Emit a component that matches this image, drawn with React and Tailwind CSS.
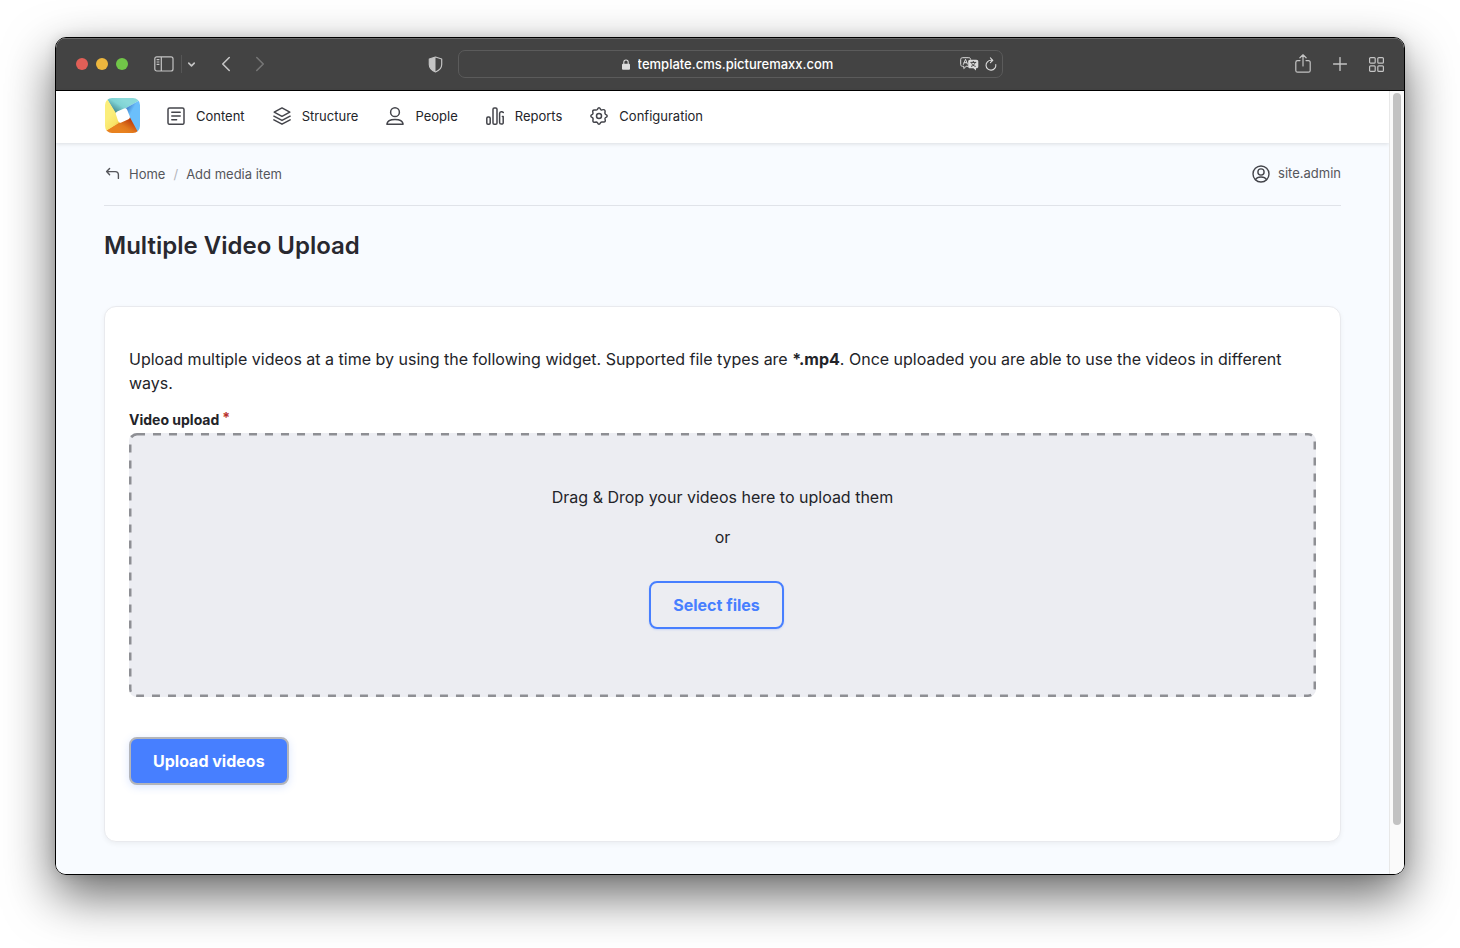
import { ChevronDown, ChevronLeft, ChevronRight, Plus } from 'lucide-react';

function Logo() {
  return (
    <svg viewBox="0 0 35 35" className="size-[35px]" aria-hidden="true">
      <defs>
        <clipPath id="logo-clip">
          <rect width="35" height="35" rx="7" />
        </clipPath>
        <linearGradient id="logo-teal" x1="0.1" y1="0.6" x2="0.6" y2="0.2">
          <stop offset="0" stopColor="#3f828c" />
          <stop offset="0.6" stopColor="#7fd3d4" />
          <stop offset="1" stopColor="#8bdada" />
        </linearGradient>
        <linearGradient id="logo-blue" x1="0.2" y1="0.1" x2="0.7" y2="0.6">
          <stop offset="0" stopColor="#2a62b4" />
          <stop offset="0.6" stopColor="#6bbffb" />
          <stop offset="1" stopColor="#6bbffb" />
        </linearGradient>
        <linearGradient id="logo-orange" x1="0.8" y1="0.2" x2="0.3" y2="0.6">
          <stop offset="0" stopColor="#b9360b" />
          <stop offset="0.7" stopColor="#e27a1e" />
          <stop offset="1" stopColor="#e8821f" />
        </linearGradient>
        <linearGradient id="logo-yellow" x1="0.5" y1="0.4" x2="0.8" y2="0.9">
          <stop offset="0" stopColor="#fbee7b" />
          <stop offset="0.6" stopColor="#f9e468" />
          <stop offset="1" stopColor="#e6b22e" />
        </linearGradient>
      </defs>
      <g clipPath="url(#logo-clip)">
        <path d="M0 0H35V2L19.5 11L17 18L10.7 16L1.5 0Z" fill="url(#logo-teal)" />
        <path d="M35 2V35H33L24.7 20L17 18L19 11.3Z" fill="url(#logo-blue)" />
        <path d="M34 35H0V33L14 24.5L17 18L25 19.5L33.5 35Z" fill="url(#logo-orange)" />
        <path d="M0 33.5V0H1.5L11.5 16L17 18L15.5 24Z" fill="url(#logo-yellow)" />
        <path
          d="M13 15.6L20 12.6L22.6 19.2L15.4 22.4Z"
          fill="#fff"
          stroke="#fff"
          strokeWidth="4.6"
          strokeLinejoin="round"
        />
      </g>
    </svg>
  );
}

function Icon({ children, box = 18, className = 'size-[18px]', width = 1.5 }) {
  return (
    <svg
      viewBox={`0 0 ${box} ${box}`}
      className={`shrink-0 ${className}`}
      fill="none"
      stroke="currentColor"
      strokeWidth={width}
      strokeLinecap="round"
      strokeLinejoin="round"
      aria-hidden="true"
    >
      {children}
    </svg>
  );
}

const navItems = [
  {
    label: 'Content',
    icon: (
      <>
        <rect x="1" y="0.9" width="16" height="16.4" rx="1.6" />
        <path d="M4.8 5.2H13.2M4.8 9H13.2M4.8 12.8H9.6" />
      </>
    ),
  },
  {
    label: 'Structure',
    icon: (
      <>
        <path d="M9 0.9L16.8 5.2L9 9.3L1.2 5.2Z" />
        <path d="M0.9 9.2L9 13.4L17.1 9.2M0.9 12.9L9 17.2L17.1 12.9" />
      </>
    ),
  },
  {
    label: 'People',
    icon: (
      <>
        <circle cx="9" cy="5.2" r="4.4" />
        <path d="M0.9 17.2C1.3 13.8 5 12.4 9 12.4S16.7 13.8 17.1 17.2Z" />
      </>
    ),
  },
  {
    label: 'Reports',
    icon: (
      <>
        <rect x="0.8" y="10" width="3.4" height="7.2" rx="1.2" />
        <rect x="7" y="0.9" width="4" height="16.3" rx="1.3" />
        <path d="M17.3 5.4C16.6 4.6 13.6 4.4 13.6 6.4V15.4C13.6 17.6 17.2 17.5 17.2 16V9.6H16.4" />
      </>
    ),
  },
  {
    label: 'Configuration',
    icon: (
      <>
        <path d="M7.4 2.4Q9 -0.8 10.6 2.4Q11 3.1 11.9 2.9Q15.3 1.9 15.1 4.5L14.9 6.1Q14.9 6.9 15.6 7.4Q18.8 9 15.6 10.6Q14.9 11.1 15 11.9Q16 15.3 13.5 15.1L11.9 14.9Q11.1 14.9 10.6 15.6Q9 18.8 7.4 15.6Q6.9 14.9 6.1 15Q2.7 16 2.9 13.5L3.1 11.9Q3.1 11.1 2.4 10.6Q-0.8 9 2.4 7.4Q3.1 6.9 3 6.1Q2 2.7 4.5 2.9L6.1 3.1Q6.9 3.1 7.4 2.4Z" />
        <circle cx="9" cy="9" r="2.5" />
      </>
    ),
  },
];

function BrowserBar() {
  return (
    <div className="flex h-[53px] items-center border-b border-black bg-[#434343] px-5 text-[#c4c4c4] shadow-[inset_0_1px_0_#6a6a6a]">
      <div className="flex flex-1 items-center">
        <div className="flex gap-2">
          <button aria-label="Close" className="size-3 rounded-full bg-[#e15f57]" />
          <button aria-label="Minimize" className="size-3 rounded-full bg-[#edb73e]" />
          <button aria-label="Zoom" className="size-3 rounded-full bg-[#71c648]" />
        </div>
        <button aria-label="Sidebar" className="ml-[26px]">
          <svg viewBox="0 0 20 16" className="h-4 w-5" fill="none" stroke="currentColor" strokeWidth="1.2">
            <rect x="0.8" y="0.8" width="18.2" height="14.2" rx="2" />
            <path d="M7.3 1V15M2.6 3.7H5.4M2.6 6H5.4M2.6 8.3H5.4" />
          </svg>
        </button>
        <div className="ml-[7px] h-[18px] w-px bg-[#565656]" />
        <button aria-label="Tab groups" className="ml-1">
          <ChevronDown size={11} strokeWidth={3.5} />
        </button>
        <button aria-label="Back" className="ml-4">
          <ChevronLeft size={26} strokeWidth={1.5} />
        </button>
        <button aria-label="Forward" className="ml-2 text-[#757575]">
          <ChevronRight size={26} strokeWidth={1.5} />
        </button>
        <button aria-label="Privacy report" className="mr-[15px] ml-auto">
          <svg viewBox="0 0 15 17" className="h-[17px] w-[15px]">
            <path
              d="M7.5 1L13.7 3V8.5C13.7 12 11 14.5 7.5 16C4 14.5 1.3 12 1.3 8.5V3Z"
              fill="none"
              stroke="currentColor"
              strokeWidth="1.2"
              strokeLinejoin="round"
            />
            <path d="M7.5 1V16C4 14.5 1.3 12 1.3 8.5V3Z" fill="currentColor" />
          </svg>
        </button>
      </div>

      <div className="flex h-7 w-[545px] items-center rounded-[7px] border border-[#5b5b5b]">
        <div className="flex-1" />
        <svg viewBox="0 0 8 11" className="h-[11px] w-2" aria-hidden="true">
          <rect x="0" y="4.8" width="8" height="6" rx="1" fill="#dcdcdc" />
          <path d="M1.8 5V3.2C1.8 0.3 6.2 0.3 6.2 3.2V5" fill="none" stroke="#dcdcdc" strokeWidth="1.1" />
        </svg>
        <input
          aria-label="Address"
          defaultValue="template.cms.picturemaxx.com"
          className="ml-2 field-sizing-content bg-transparent pt-[2px] text-[13px] font-medium text-white outline-none"
        />
        <div className="flex flex-1 items-center justify-end gap-[6px] pr-[5px] text-[#dcdcdc]">
          <button aria-label="Translate">
            <svg viewBox="0 0 19 14" className="h-[14px] w-[19px]" fill="none" strokeLinecap="round" strokeLinejoin="round">
              <path
                d="M8 9.3H6.2L3.8 11.6V9.3H2.6C1.4 9.3 0.7 8.7 0.7 7.5V2.6C0.7 1.4 1.4 0.7 2.6 0.7H8.8C10 0.7 10.6 1.4 10.6 2.2"
                stroke="currentColor"
              />
              <path d="M3.4 7.4L5.5 2.3L7.4 7M4.1 5.7H6.7" stroke="currentColor" />
              <path
                d="M10 2.8H16.4C17.6 2.8 18.3 3.5 18.3 4.6V9.5C18.3 10.7 17.6 11.3 16.4 11.3H16V13.6L13.4 11.3H10C8.8 11.3 8.2 10.7 8.2 9.5V4.6C8.2 3.5 8.8 2.8 10 2.8Z"
                fill="currentColor"
              />
              <path d="M10.8 5.4H15.8M13.3 4.4V5.4M11.4 9.3C13.6 8.5 14.6 7.3 15 5.6M11.8 6.6C12.4 8 13.6 8.9 15.3 9.3" stroke="#434343" />
            </svg>
          </button>
          <button aria-label="Reload">
            <svg viewBox="0 0 12 14" className="h-[14px] w-3" fill="none" stroke="currentColor" strokeWidth="1.1" strokeLinecap="round" strokeLinejoin="round">
              <path d="M10.8 7.6A4.9 4.9 0 1 1 6 3.3H7.6M5.4 0.9L7.8 3.3L5.4 5.7" />
            </svg>
          </button>
        </div>
      </div>

      <div className="flex flex-1 items-center justify-end">
        <button aria-label="Share">
          <svg viewBox="0 0 16 20" className="h-5 w-4" fill="none" stroke="currentColor" strokeWidth="1.2" strokeLinecap="round" strokeLinejoin="round">
            <path d="M5 6.6H2.6C1.5 6.6 0.8 7.3 0.8 8.4V16.4C0.8 17.5 1.5 18.2 2.6 18.2H13.4C14.5 18.2 15.2 17.5 15.2 16.4V8.4C15.2 7.3 14.5 6.6 13.4 6.6H11" />
            <path d="M8 12V1M4.9 3.8L8 0.8L11.1 3.8" />
          </svg>
        </button>
        <button aria-label="New tab" className="ml-[18px]">
          <Plus size={22} strokeWidth={1.5} />
        </button>
        <button aria-label="Tab overview" className="ml-[18px]">
          <svg viewBox="0 0 15 15" className="size-[15px]" fill="none" stroke="currentColor" strokeWidth="1.2">
            <rect x="0.6" y="0.6" width="5.6" height="5.6" rx="1" />
            <rect x="8.8" y="0.6" width="5.6" height="5.6" rx="1" />
            <rect x="0.6" y="8.8" width="5.6" height="5.6" rx="1" />
            <rect x="8.8" y="8.8" width="5.6" height="5.6" rx="1" />
          </svg>
        </button>
      </div>
    </div>
  );
}

function DropZone() {
  return (
    <div className="relative flex flex-col items-center overflow-hidden rounded-lg bg-[#ecedf2] pt-[52px] pb-[68px]">
      <svg className="pointer-events-none absolute inset-0 size-full" aria-hidden="true">
        <rect width="100%" height="100%" rx="8" fill="none" stroke="#8e8f94" strokeWidth="5" strokeDasharray="8 8" />
      </svg>
      <p>Drag &amp; Drop your videos here to upload them</p>
      <p className="mt-4">or</p>
      <button
        id="video-upload"
        className="mt-8 mr-3 h-12 rounded-lg border-2 border-[#477fff] px-[22px] font-bold text-[#477fff] shadow-[0_1px_2px_rgba(71,127,255,0.2)]"
      >
        Select files
      </button>
    </div>
  );
}

export default function App() {
  return (
    <div className="bg-white px-[55px] pt-[37px] pb-[73px] font-['Inter',sans-serif] text-[#232429]">
      <div className="overflow-hidden rounded-[11px] border border-black shadow-[0_20px_50px_rgba(0,0,0,0.6),0_0_12px_rgba(0,0,0,0.12)]">
        <BrowserBar />
        <div className="flex bg-[#f8fbff]">
          <div className="min-w-0 flex-1">
            <header className="flex h-[52px] items-center bg-white px-12 pb-[3px] shadow-[0_1px_4px_rgba(0,0,0,0.12)]">
              <a href="#" aria-label="Dashboard" className="ml-px">
                <Logo />
              </a>
              <nav className="ml-[27px] flex gap-7">
                {navItems.map((item) => (
                  <a key={item.label} href="#" className="flex items-center gap-[11px] pt-px text-[13px] leading-5">
                    <span className="text-[#44454b]">
                      <Icon>{item.icon}</Icon>
                    </span>
                    {item.label}
                  </a>
                ))}
              </nav>
            </header>

            <main className="px-12 pb-8">
              <div className="flex h-[63px] items-center justify-between border-b border-[#e0e3e9] text-[13px] text-[#55565b]">
                <nav aria-label="Breadcrumb" className="flex items-center pt-px">
                  <a href="#" className="flex items-center gap-[9px]">
                    <Icon box={16} className="size-4" width={1.4}>
                      <path d="M5.6 1.4L2.6 4.6L5.6 7.8M2.8 4.6H11.2C13.4 4.6 14.4 5.8 14.4 7.8V11.4" />
                    </Icon>
                    Home
                  </a>
                  <span className="px-2 text-[#b4b6bc]">/</span>
                  <a href="#">Add media item</a>
                </nav>
                <a href="#" className="flex items-center gap-2">
                  <span className="text-[#44454b]">
                    <Icon width={1.4}>
                      <circle cx="9" cy="9" r="8" />
                      <circle cx="9" cy="7" r="3.1" />
                      <path d="M3.4 14.6C4.6 12.6 6.6 12 9 12S13.4 12.6 14.6 14.6" />
                    </Icon>
                  </span>
                  site.admin
                </a>
              </div>

              <h1 className="mt-6 text-2xl leading-8 font-semibold text-[#28282f]">Multiple Video Upload</h1>

              <form
                onSubmit={(e) => e.preventDefault()}
                className="mt-[44px] rounded-xl border border-[#e9eaee] bg-white px-6 pt-10 pb-14 shadow-[0_2px_5px_rgba(0,0,0,0.05)]"
              >
                <p>
                  Upload multiple videos at a time by using the following widget. Supported file types are{' '}
                  <strong>*.mp4</strong>. Once uploaded you are able to use the videos in different ways.
                </p>
                <label htmlFor="video-upload" className="mt-3 flex h-[26px] items-center text-sm font-bold">
                  Video upload
                  <span className="ml-[3px] pb-1 text-[#b8302a]">*</span>
                </label>
                <DropZone />
                <button
                  type="submit"
                  className="mt-10 h-12 rounded-lg border-2 border-[#b3b5ba] bg-[#477fff] px-[22px] font-bold text-white shadow-[0_2px_8px_rgba(71,127,255,0.2)]"
                >
                  Upload videos
                </button>
              </form>
            </main>
          </div>
          <div className="flex w-[15px] flex-col items-center border-l border-[#e8e8e8] bg-[#fafafa] pt-[2px] pb-[49px]">
            <div className="w-2 flex-1 rounded-full bg-[#c2c2c2]" />
          </div>
        </div>
      </div>
    </div>
  );
}
